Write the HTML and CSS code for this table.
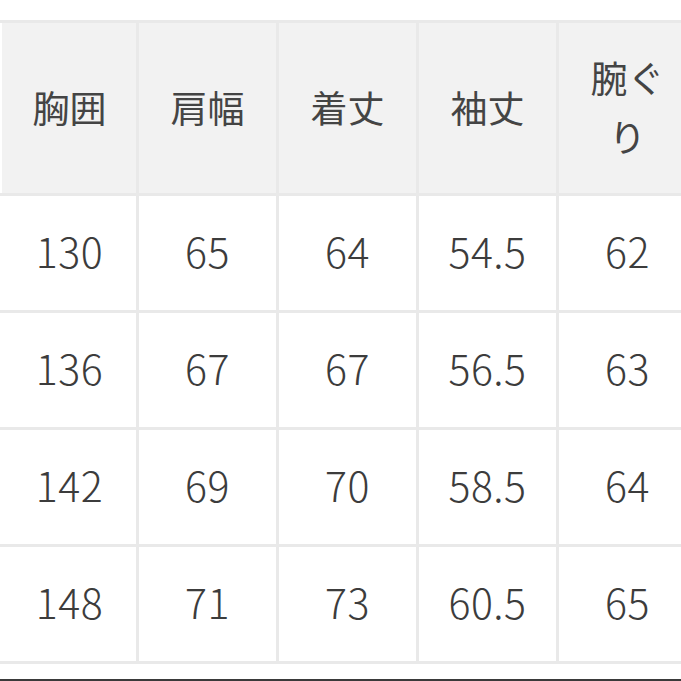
FILE: index.html
```html
<!DOCTYPE html>
<html lang="ja">
<head>
<meta charset="utf-8">
<link rel="stylesheet" href="styles.css">
</head>
<body>
<div class="page">
  <table class="size-table">
    <colgroup>
      <col class="c1"><col class="cn"><col class="cn"><col class="cn"><col class="cn">
    </colgroup>
    <thead>
      <tr class="head">
        <th>胸囲</th><th>肩幅</th><th>着丈</th><th>袖丈</th><th class="wrap">腕ぐ<br>り</th>
      </tr>
    </thead>
    <tbody>
      <tr><td>130</td><td>65</td><td>64</td><td>54.5</td><td>62</td></tr>
      <tr><td>136</td><td>67</td><td>67</td><td>56.5</td><td>63</td></tr>
      <tr><td>142</td><td>69</td><td>70</td><td>58.5</td><td>64</td></tr>
      <tr><td>148</td><td>71</td><td>73</td><td>60.5</td><td>65</td></tr>
    </tbody>
  </table>
  <div class="bottom-bar"></div>
</div>
</body>
</html>
```
FILE: styles.css
```css
html, body {
  margin: 0;
  padding: 0;
  background: #ffffff;
}
body {
  width: 681px;
  height: 681px;
  overflow: hidden;
  font-family: "Noto Sans CJK JP", "Noto Sans", sans-serif;
  font-weight: 300;
  color: #3c3c3c;
}
.page {
  position: relative;
  width: 681px;
  height: 681px;
  padding-top: 20px;
  box-sizing: border-box;
}
.size-table {
  table-layout: fixed;
  width: 696px;
  border-collapse: collapse;
  margin-left: 0;
}
.c1 { width: 136px; }
.cn { width: 140px; }
.size-table th,
.size-table td {
  border: 3px solid #e9e9e9;
  text-align: center;
  vertical-align: middle;
  padding: 0;
}
.size-table tr > :first-child {
  border-left-color: transparent;
}
.size-table th {
  background: #f2f2f2;
  font-weight: 400;
  color: #444444;
  font-size: 37px;
  line-height: 1.2;
  height: 168px;
  padding-bottom: 2px;
}
.size-table th.wrap {
  line-height: 59px;
}
.size-table td {
  background: #ffffff;
  font-size: 41px;
  letter-spacing: 0.5px;
  height: 108px;
  line-height: 1;
  padding-bottom: 6px;
}
.bottom-bar {
  position: absolute;
  left: 0;
  right: 0;
  bottom: 0;
  height: 2px;
  background: #3a3a3a;
}
```
